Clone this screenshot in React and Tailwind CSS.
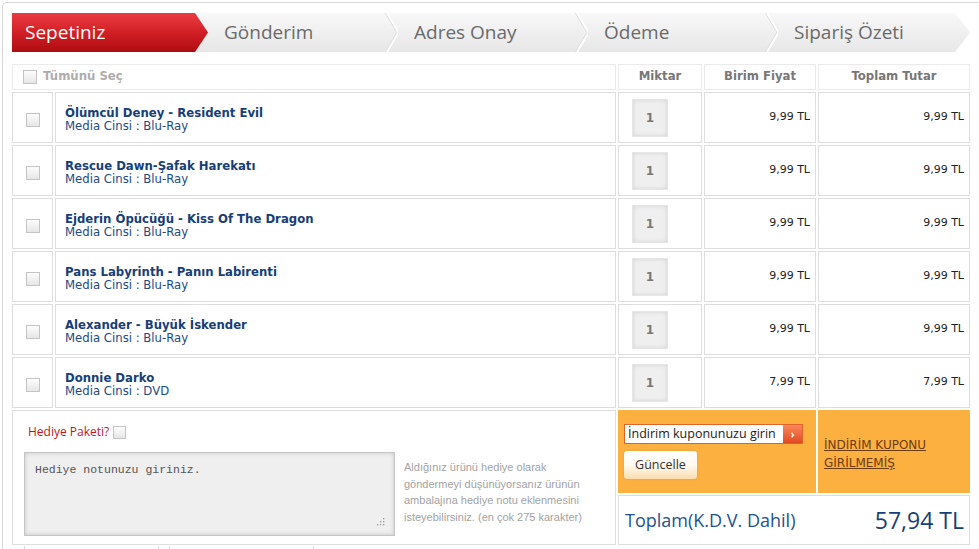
import React from "react";

const rows = [
  { name: "Ölümcül Deney - Resident Evil", media: "Blu-Ray", price: "9,99 TL" },
  { name: "Rescue Dawn-Şafak Harekatı", media: "Blu-Ray", price: "9,99 TL" },
  { name: "Ejderin Öpücüğü - Kiss Of The Dragon", media: "Blu-Ray", price: "9,99 TL" },
  { name: "Pans Labyrinth - Panın Labirenti", media: "Blu-Ray", price: "9,99 TL" },
  { name: "Alexander - Büyük İskender", media: "Blu-Ray", price: "9,99 TL" },
  { name: "Donnie Darko", media: "DVD", price: "7,99 TL" },
];

function Box({ size = "w-[14px] h-[14px]" }) {
  return (
    <span
      className={`block ${size} border border-[#c4c4c4] bg-linear-to-b from-[#fdfdfd] to-[#e6e6e6]`}
    />
  );
}

function Chevron() {
  return (
    <svg width="13" height="39" viewBox="0 0 13 39" className="shrink-0 block">
      <polyline points="0.5,0 12,19.5 0.5,39" fill="none" stroke="#d6d6d6" strokeWidth="1" />
      <polyline points="2,0 13.5,19.5 2,39" fill="none" stroke="#ffffff" strokeWidth="2" />
    </svg>
  );
}

function Step({ children }) {
  return (
    <div className="w-[177px] shrink-0 flex items-center pl-[16px] text-[19px] text-[#6a6a6a] font-['Open_Sans',sans-serif]">
      {children}
    </div>
  );
}

export default function App() {
  const cell = "border border-[#dedede] bg-white";
  const head = "border border-[#ebebeb] bg-white";
  return (
    <div className="w-[979px] h-[549px] overflow-hidden bg-white font-['DejaVu_Sans',sans-serif]">
      <div className="ml-[2px] mt-[2px] w-[1100px] h-[600px] border-t border-l border-[#d8d8d8] rounded-tl-[5px] pl-[9px] pt-[10px]">
        {/* Breadcrumb */}
        <div className="w-[958px] h-[39px] flex bg-linear-to-b from-[#f8f8f8] to-[#e7e7e7] [clip-path:polygon(0_0,943px_0,100%_50%,943px_100%,0_100%)]">
          <div className="w-[196px] shrink-0 flex items-center pl-[13px] text-[19px] text-white font-['Open_Sans',sans-serif] bg-linear-to-b from-[#ea3a41] via-[#d21f26] to-[#ad0b0f] [clip-path:polygon(0_0,183px_0,100%_50%,183px_100%,0_100%)]">
            Sepetiniz
          </div>
          <Step>Gönderim</Step>
          <Chevron />
          <Step>Adres Onay</Step>
          <Chevron />
          <Step>Ödeme</Step>
          <Chevron />
          <Step>Sipariş Özeti</Step>
        </div>

        {/* Table grid */}
        <div className="mt-[12px] grid w-[958px] grid-cols-[41px_561px_84px_112px_152px] grid-rows-[26px_repeat(6,51px)_83px_50px] gap-[2px]">
          <div className={`${head} col-span-2 flex items-center pl-[10px] gap-[6px]`}>
            <Box />
            <span className="text-[11.7px] font-bold text-[#adadad]">Tümünü Seç</span>
          </div>
          <div className={`${head} flex items-center justify-center text-[11.7px] font-bold text-[#777]`}>Miktar</div>
          <div className={`${head} flex items-center justify-center text-[11.7px] font-bold text-[#777]`}>Birim Fiyat</div>
          <div className={`${head} flex items-center justify-center text-[11.7px] font-bold text-[#777]`}>Toplam Tutar</div>

          {rows.map((r, i) => (
            <React.Fragment key={i}>
              <div className={`${cell} flex items-center justify-center pt-[4px]`}>
                <Box />
              </div>
              <div className={`${cell} flex flex-col justify-center pl-[9px] pt-[4px] leading-[13px]`}>
                <span className="text-[11.7px] font-bold text-[#163e78]">{r.name}</span>
                <span className="text-[11.7px] text-[#1d4a86]">Media Cinsi : {r.media}</span>
              </div>
              <div className={`${cell} flex items-center pl-[13px]`}>
                <div className="w-[36px] h-[38px] flex items-center justify-center bg-[#efefef] border border-[#e6e6e6] shadow-[inset_0_0_4px_rgba(0,0,0,0.12)] text-[12px] font-bold text-[#777]">
                  1
                </div>
              </div>
              <div className={`${cell} flex items-center justify-end pr-[5px] text-[11px] text-[#222]`}>{r.price}</div>
              <div className={`${cell} flex items-center justify-end pr-[5px] text-[11px] text-[#222]`}>{r.price}</div>
            </React.Fragment>
          ))}

          {/* Gift section */}
          <div className={`${cell} col-span-2 row-span-2 pl-[11px] pt-[12px]`}>
            <div className="flex items-center gap-[4px] pl-[4px]">
              <span className="text-[12px] text-[#c3161c] font-['Open_Sans',sans-serif]">Hediye Paketi?</span>
              <Box size="w-[13px] h-[13px]" />
            </div>
            <div className="mt-[11px] flex">
              <div className="relative w-[371px] h-[84px] shrink-0 bg-[#efefef] border border-[#c6c6c6] shadow-[inset_0_0_4px_rgba(0,0,0,0.18)] pl-[10px] pt-[10px] text-[11.5px] leading-[14px] text-[#555] font-['Liberation_Mono',monospace]">
                Hediye notunuzu giriniz.
                <svg width="9" height="9" viewBox="0 0 9 9" className="absolute right-[9px] bottom-[9px]">
                  <g fill="#9a9a9a">
                    <rect x="7" y="1" width="1.3" height="1.3" />
                    <rect x="7" y="4" width="1.3" height="1.3" />
                    <rect x="4" y="4" width="1.3" height="1.3" />
                    <rect x="7" y="7" width="1.3" height="1.3" />
                    <rect x="4" y="7" width="1.3" height="1.3" />
                    <rect x="1" y="7" width="1.3" height="1.3" />
                  </g>
                </svg>
              </div>
              <p className="ml-[9px] mt-[7px] w-[188px] text-[11px] leading-[16.7px] text-[#a3a3a3] font-['Liberation_Sans',sans-serif]">
                Aldığınız ürünü hediye olarak göndermeyi düşünüyorsanız ürünün ambalajına hediye notu eklenmesini isteyebilirsiniz. (en çok 275 karakter)
              </p>
            </div>
          </div>

          {/* Coupon */}
          <div className="col-span-2 bg-[#fcb040] pl-[6px] pt-[14px] font-['Open_Sans',sans-serif]">
            <div className="flex w-[179px] h-[20px] border border-[#e0632c] bg-white">
              <div className="flex-1 flex items-center pl-[3px] text-[12.5px] text-[#222] leading-none">İndirim kuponunuzu girin</div>
              <div className="w-[19px] flex items-center justify-center bg-linear-to-b from-[#f8875a] to-[#e2481f] text-white text-[10px] font-bold leading-none">›</div>
            </div>
            <div className="mt-[7px] w-[73px] h-[28px] rounded-[3px] bg-linear-to-b from-white via-[#fffaf0] to-[#fbdcae] shadow-[0_0_2px_rgba(0,0,0,0.15)] flex items-center justify-center text-[12.5px] text-[#333]">
              Güncelle
            </div>
          </div>
          <div className="bg-[#fcb040] pl-[6px] pt-[26px] text-[12px] leading-[18px] text-[#6e3c12] underline">
            İNDİRİM KUPONU<br />GİRİLMEMİŞ
          </div>

          {/* Total */}
          <div className={`${cell} col-span-3 flex items-center justify-between pl-[6px] pr-[5px] font-['Open_Sans',sans-serif]`}>
            <span className="text-[18px] text-[#21528f]">Toplam(K.D.V. Dahil)</span>
            <span className="text-[23px] text-[#173f77]">57,94 TL</span>
          </div>
        </div>

        {/* stub of next table */}
        <div className="mt-[1px] flex h-[6px]">
          <div className="ml-[12px] w-[135px] border-l border-r border-[#d6d6d6]" />
          <div className="ml-[10px] w-[145px] border-l border-r border-[#d6d6d6]" />
        </div>
      </div>
    </div>
  );
}
